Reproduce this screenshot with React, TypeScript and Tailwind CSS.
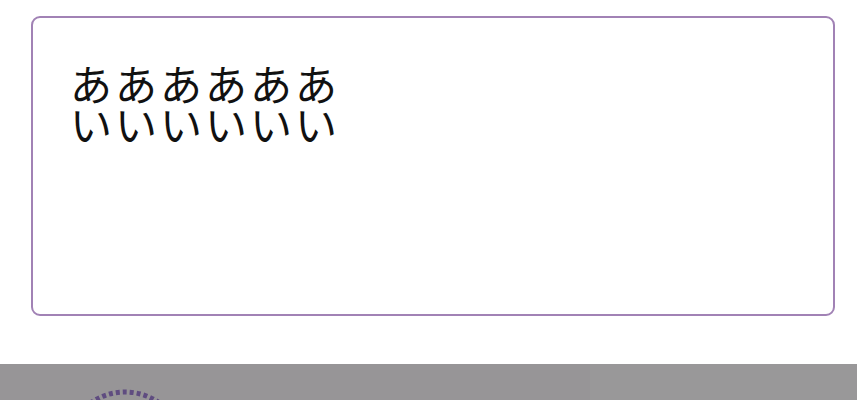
import React from "react";

export default function App() {
  return (
    <div className="w-[857px] h-[400px] overflow-hidden bg-white flex flex-col" style={{ fontFamily: '"Noto Sans CJK JP", "Noto Sans", sans-serif' }}>
      <div className="pt-[16px] pl-[31px] pr-[22px] h-[364px]">
        <div className="h-[300px] border-[2.5px] border-[#a182b5] rounded-[9px] pl-[37px] pt-[45px]">
          <div className="text-[42px] leading-[40px] tracking-[3px] text-[#111]">
            <div>ああああああ</div>
            <div>いいいいいい</div>
          </div>
        </div>
      </div>
      <div className="relative flex-1 bg-[#979597]">
        <div className="absolute right-0 top-0 bottom-0 w-[267px] bg-[#999899]" />
        <svg className="absolute left-0 top-0" width="300" height="36" viewBox="0 0 300 36">
          <circle cx="125" cy="88" r="60" fill="none" stroke="#5f4c80" strokeWidth="5" strokeDasharray="4 3" />
          <circle cx="-40" cy="70" r="45" fill="none" stroke="#5f4c80" strokeWidth="4" strokeDasharray="4 3" />
        </svg>
      </div>
    </div>
  );
}
